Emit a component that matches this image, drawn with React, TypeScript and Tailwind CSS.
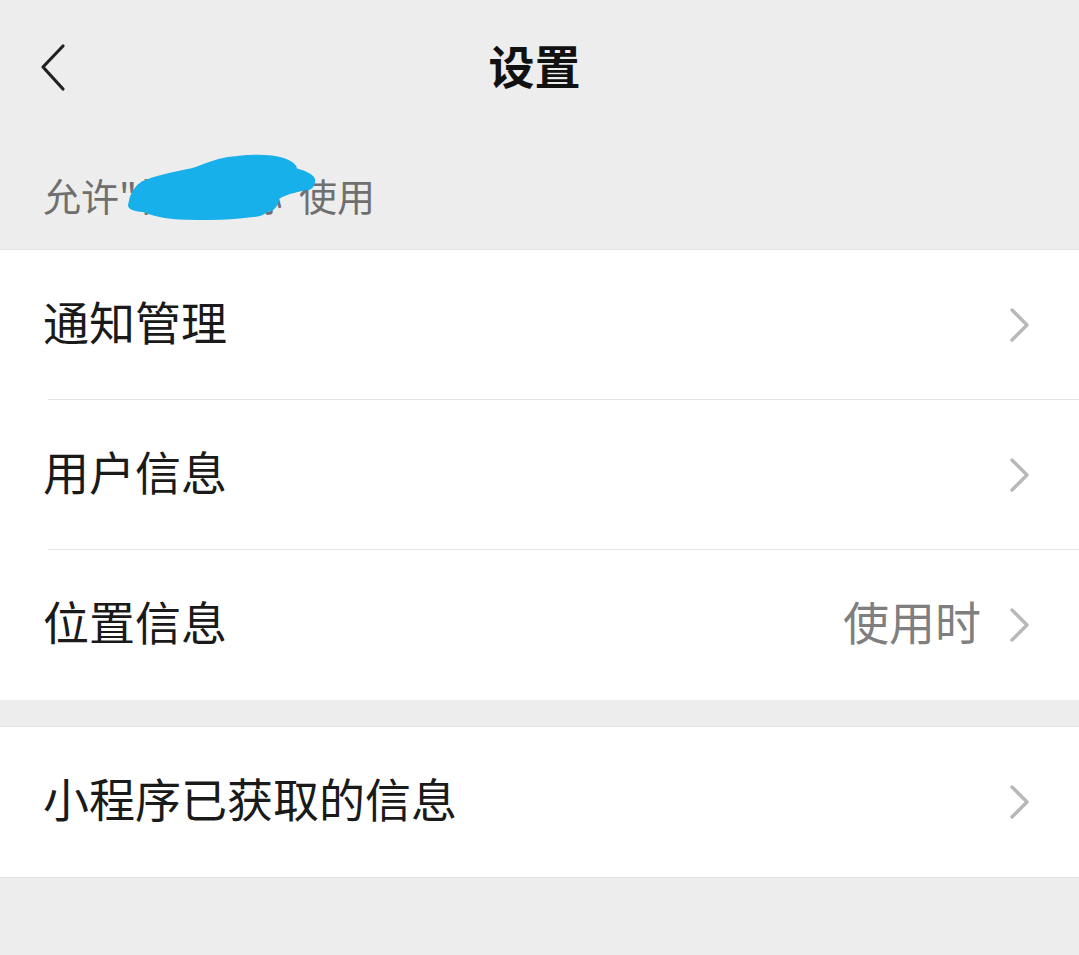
const FONT = { fontFamily: '"Noto Sans CJK SC", "Noto Sans", sans-serif' };

type Row = { label: string; value?: string };

const GROUP_ONE: Row[] = [
  { label: "通知管理" },
  { label: "用户信息" },
  { label: "位置信息", value: "使用时" },
];

function Chevron() {
  return (
    <svg width="22" height="36" viewBox="0 0 22 36" className="shrink-0" aria-hidden="true">
      <path d="M3 3 L18 18 L3 33" fill="none" stroke="#b8b8b8" strokeWidth="3.4" strokeLinecap="round" strokeLinejoin="round" />
    </svg>
  );
}

function SettingRow({ row, divider }: { row: Row; divider: boolean }) {
  return (
    <div className="relative flex h-[150px] items-center pl-[43px] pr-[48px]">
      <span className="flex-1 pb-[10px] text-[46px] leading-none text-[#1a1a1a]">{row.label}</span>
      {row.value && (
        <span className="mr-[28px] pb-[10px] text-[46px] leading-none text-[#7f7f7f]">{row.value}</span>
      )}
      <Chevron />
      {divider && <div className="absolute bottom-0 left-[48px] right-0 h-px bg-[#e6e6e6]" />}
    </div>
  );
}

// the blue scribble that hides the mini program's name
function Redaction() {
  return (
    <svg
      className="absolute left-[120px] top-[150px]"
      width="200"
      height="80"
      viewBox="0 0 200 80"
      aria-hidden="true"
    >
      <path
        d="M10 55 C12 42 18 36 23 33 C40 26 55 24 73 20 C90 14 100 9 117 8 C135 6 150 6 163 10 C172 13 176 17 175 20 C182 22 195 26 193 32 C192 37 189 38 187 38 C175 40 162 44 157 48 C158 54 152 60 147 60 C142 64 138 65 133 65 C118 67 105 68 90 68 C75 68 62 68 53 67 C40 66 30 63 23 60 C15 59 10 58 10 55 Z"
        fill="#17b0ea"
        stroke="#17b0ea"
        strokeWidth="4"
        strokeLinejoin="round"
      />
    </svg>
  );
}

export default function App() {
  return (
    <div className="min-h-[955px] w-[1079px] bg-[#ededed]" style={FONT}>
      {/* header */}
      <div className="relative h-[249px]">
        <svg width="30" height="50" viewBox="0 0 30 50" className="absolute left-[38px] top-[42px]" aria-hidden="true">
          <path d="M25 4 L5 25 L25 47" fill="none" stroke="#222" strokeWidth="3.2" strokeLinecap="round" strokeLinejoin="round" />
        </svg>
        <div className="flex h-[128px] items-center justify-center pr-[10px]">
          <span className="text-[46px] font-bold leading-none text-[#111]">设置</span>
        </div>
        <div className="pl-[43px] pt-[48px] text-[38px] leading-none text-[#6f6f6f]">
          允许"<span className="tracking-[-2px]">标题名称</span>"使用
        </div>
        <Redaction />
      </div>

      <div className="border-t border-[#e3e3e3] bg-white">
        {GROUP_ONE.map((row, i) => (
          <SettingRow key={row.label} row={row} divider={i < GROUP_ONE.length - 1} />
        ))}
      </div>

      <div className="mt-[26px] border-y border-[#e3e3e3] bg-white">
        <SettingRow row={{ label: "小程序已获取的信息" }} divider={false} />
      </div>
    </div>
  );
}
